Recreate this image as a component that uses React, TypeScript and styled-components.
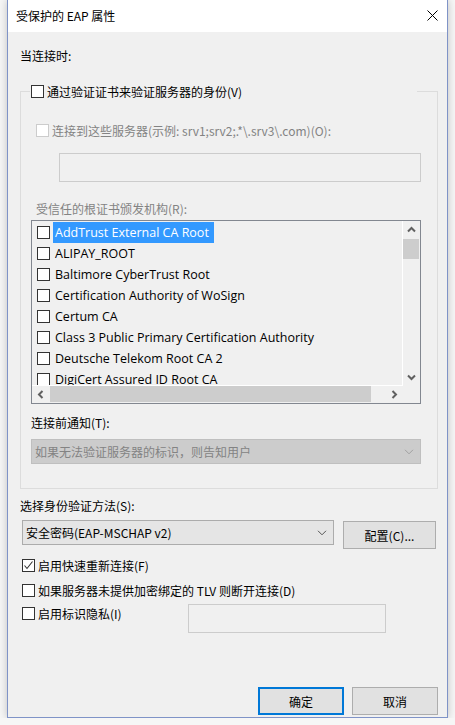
import { FC, ReactNode } from 'react'
import styled, { createGlobalStyle, css } from 'styled-components'

const GlobalStyle = createGlobalStyle`
  html, body {
    margin: 0;
    padding: 0;
    background: #f6f6f6;
  }
  body {
    font-family: "Noto Sans CJK SC", "Noto Sans", sans-serif;
    font-size: 12px;
    color: #000;
  }
`

const certificates = [
  'AddTrust External CA Root',
  'ALIPAY_ROOT',
  'Baltimore CyberTrust Root',
  'Certification Authority of WoSign',
  'Certum CA',
  'Class 3 Public Primary Certification Authority',
  'Deutsche Telekom Root CA 2',
  'DigiCert Assured ID Root CA',
]

type CheckBoxProps = {
  checked?: boolean
  disabled?: boolean
}

const CheckBox: FC<CheckBoxProps> = ({ checked, disabled }) => (
  <StyledBox $disabled={disabled}>
    {checked && (
      <svg width="11" height="11" viewBox="0 0 11 11">
        <polyline points="1.5,5.5 4,8.5 9.5,1.5" fill="none" stroke="#333" strokeWidth="1.1" />
      </svg>
    )}
  </StyledBox>
)

type CheckRowProps = CheckBoxProps & {
  children: ReactNode
}

const CheckRow: FC<CheckRowProps> = ({ checked, disabled, children }) => (
  <StyledCheckRow $disabled={disabled}>
    <CheckBox checked={checked} disabled={disabled} />
    <span>{children}</span>
  </StyledCheckRow>
)

const Chevron: FC<{ color: string }> = ({ color }) => (
  <svg width="10" height="6" viewBox="0 0 10 6">
    <polyline points="1,0.8 5,4.8 9,0.8" fill="none" stroke={color} strokeWidth="1" />
  </svg>
)

type ArrowProps = { dir: 'up' | 'down' | 'left' | 'right' }

const ScrollArrow: FC<ArrowProps> = ({ dir }) => {
  const rotate = { up: 0, right: 90, down: 180, left: 270 }[dir]
  return (
    <svg width="9" height="9" viewBox="0 0 9 9" style={{ transform: `rotate(${rotate}deg)` }}>
      <polyline points="1,6.5 4.5,3 8,6.5" fill="none" stroke="#606060" strokeWidth="2" />
    </svg>
  )
}

export default function App() {
  return (
    <>
      <GlobalStyle />
      <StyledWindow>
        <StyledTitleBar>
          <StyledTitle>受保护的 EAP 属性</StyledTitle>
          <svg width="11" height="11" viewBox="0 0 11 11">
            <path d="M0.5 0.5 L10.5 10.5 M10.5 0.5 L0.5 10.5" stroke="#000" strokeWidth="1" />
          </svg>
        </StyledTitleBar>

        <StyledContent>
          <StyledLabel $top={15}>当连接时:</StyledLabel>

          <StyledGroup>
            <StyledLegend>
              <CheckBox />
              <span>通过验证证书来验证服务器的身份(V)</span>
            </StyledLegend>

            <StyledGroupBody>
              <StyledIndent $top={22} $left={5}>
                <CheckRow disabled>连接到这些服务器(示例: srv1;srv2;.*\.srv3\.com)(O):</CheckRow>
              </StyledIndent>
              <StyledTextBox $top={14} $left={28} $width={362} />

              <StyledLabel $top={18} $left={5} $muted>
                受信任的根证书颁发机构(R):
              </StyledLabel>

              <StyledListBox>
                <StyledListView>
                  {certificates.map((name, i) => (
                    <StyledListItem key={name}>
                      <CheckBox />
                      <StyledItemText $selected={i === 0}>{name}</StyledItemText>
                    </StyledListItem>
                  ))}
                </StyledListView>
                <StyledVScroll>
                  <StyledArrowButton>
                    <ScrollArrow dir="up" />
                  </StyledArrowButton>
                  <StyledVTrack>
                    <StyledVThumb />
                  </StyledVTrack>
                  <StyledArrowButton>
                    <ScrollArrow dir="down" />
                  </StyledArrowButton>
                </StyledVScroll>
                <StyledHScroll>
                  <StyledArrowButton>
                    <ScrollArrow dir="left" />
                  </StyledArrowButton>
                  <StyledHTrack>
                    <StyledHThumb />
                  </StyledHTrack>
                  <StyledArrowButton>
                    <ScrollArrow dir="right" />
                  </StyledArrowButton>
                </StyledHScroll>
                <StyledCorner />
              </StyledListBox>

              <StyledLabel $top={10}>连接前通知(T):</StyledLabel>
              <StyledSelect $disabled $width={390}>
                <span>如果无法验证服务器的标识，则告知用户</span>
                <Chevron color="#a0a0a0" />
              </StyledSelect>
            </StyledGroupBody>
          </StyledGroup>

          <StyledLabel $top={8}>选择身份验证方法(S):</StyledLabel>
          <StyledMethodRow>
            <StyledSelect $width={312}>
              <span>安全密码(EAP-MSCHAP v2)</span>
              <Chevron color="#555" />
            </StyledSelect>
            <StyledButton $width={93} $offset={1}>
              配置(C)...
            </StyledButton>
          </StyledMethodRow>

          <StyledOptions>
            <CheckRow checked>启用快速重新连接(F)</CheckRow>
            <CheckRow>如果服务器未提供加密绑定的 TLV 则断开连接(D)</CheckRow>
            <StyledPrivacyRow>
              <StyledPrivacyLabel>
                <CheckRow>启用标识隐私(I)</CheckRow>
              </StyledPrivacyLabel>
              <StyledTextBox $width={198} />
            </StyledPrivacyRow>
          </StyledOptions>

          <StyledFooter>
            <StyledButton $width={86} $primary>
              确定
            </StyledButton>
            <StyledButton $width={86}>取消</StyledButton>
          </StyledFooter>
        </StyledContent>
      </StyledWindow>
    </>
  )
}

const StyledWindow = styled.div`
  margin-left: 7px;
  width: 441px;
  height: 718px;
  box-sizing: border-box;
  border: 1px solid #7f93c7;
  border-top: none;
  background: #f0f0f0;
  display: flex;
  flex-direction: column;
  box-shadow: 0 0 8px rgba(0, 0, 0, 0.22);
`

const StyledTitleBar = styled.div`
  height: 31px;
  flex: none;
  background: #fff;
  display: flex;
  align-items: center;
  justify-content: space-between;
  padding: 0 9px 1px 8px;
`

const StyledTitle = styled.span`
  line-height: 17px;
`

const StyledContent = styled.div`
  flex: 1;
  display: flex;
  flex-direction: column;
  padding: 0 10px 2px 12px;
`

const StyledLabel = styled.div<{ $top?: number; $left?: number; $muted?: boolean }>`
  line-height: 17px;
  margin-top: ${(p) => p.$top ?? 0}px;
  margin-left: ${(p) => p.$left ?? 0}px;
  color: ${(p) => (p.$muted ? '#838383' : '#000')};
`

const StyledBox = styled.span<{ $disabled?: boolean }>`
  width: 13px;
  height: 13px;
  box-sizing: border-box;
  flex: none;
  display: inline-flex;
  align-items: center;
  justify-content: center;
  border: 1px solid ${(p) => (p.$disabled ? '#cccccc' : '#333')};
  background: #fff;
`

const StyledCheckRow = styled.div<{ $disabled?: boolean }>`
  display: flex;
  align-items: center;
  gap: 3px;
  line-height: 17px;
  white-space: nowrap;
  color: ${(p) => (p.$disabled ? '#838383' : '#000')};
`

const StyledGroup = styled.fieldset`
  margin: 19px -1px 0 0;
  padding: 0;
  min-inline-size: 0;
  border: 1px solid #dcdcdc;
`

const StyledLegend = styled.legend`
  margin-left: 9px;
  padding: 0 0 0 1px;
  width: 386px;
  height: 17px;
  display: flex;
  align-items: center;
  gap: 3px;
  line-height: 17px;
`

const StyledGroupBody = styled.div`
  display: flex;
  flex-direction: column;
  padding: 0 15px 24px 10px;
`

const StyledIndent = styled.div<{ $top: number; $left: number }>`
  margin-top: ${(p) => p.$top}px;
  margin-left: ${(p) => p.$left}px;
`

const StyledTextBox = styled.div<{ $top?: number; $left?: number; $width: number }>`
  margin-top: ${(p) => p.$top ?? 0}px;
  margin-left: ${(p) => p.$left ?? 0}px;
  width: ${(p) => p.$width}px;
  height: 29px;
  box-sizing: border-box;
  border: 1px solid #cccccc;
  background: #f0f0f0;
  flex: none;
`

const StyledListBox = styled.div`
  margin-top: 3px;
  width: 390px;
  height: 184px;
  box-sizing: border-box;
  border: 1px solid #828790;
  display: grid;
  grid-template-columns: 1fr 17px;
  grid-template-rows: 1fr 17px;
  overflow: hidden;
`

const StyledListView = styled.div`
  overflow: hidden;
  padding-top: 1px;
  border-right: 1px solid #fff;
  border-bottom: 1px solid #fff;
`

const StyledListItem = styled.div`
  height: 21px;
  display: flex;
  align-items: center;
  padding-left: 5px;
  gap: 3px;
  white-space: nowrap;
`

const StyledItemText = styled.span<{ $selected?: boolean }>`
  font-family: "Open Sans", "Noto Sans CJK SC", sans-serif;
  font-size: 12.5px;
  line-height: 21px;
  padding: 0 5px 0 2px;
  ${(p) =>
    p.$selected &&
    css`
      background: #3399ff;
      color: #fff;
    `}
`

const StyledArrowButton = styled.div`
  width: 17px;
  height: 17px;
  flex: none;
  display: flex;
  align-items: center;
  justify-content: center;
`

const StyledVScroll = styled.div`
  display: flex;
  flex-direction: column;
`

const StyledVTrack = styled.div`
  flex: 1;
  padding: 1px 1px 0 0;
`

const StyledVThumb = styled.div`
  height: 20px;
  background: #cdcdcd;
`

const StyledHScroll = styled.div`
  display: flex;
`

const StyledHTrack = styled.div`
  flex: 1;
  padding: 0 15px 1px 1px;
`

const StyledHThumb = styled.div`
  height: 100%;
  background: #cdcdcd;
`

const StyledCorner = styled.div`
  background: #f0f0f0;
`

const StyledSelect = styled.div<{ $disabled?: boolean; $width: number }>`
  width: ${(p) => p.$width}px;
  height: 25px;
  box-sizing: border-box;
  flex: none;
  display: flex;
  align-items: center;
  justify-content: space-between;
  padding: 0 6px 0 3px;
  line-height: 17px;
  ${(p) =>
    p.$disabled
      ? css`
          margin-top: 8px;
          background: #cccccc;
          border: 1px solid #bfbfbf;
          color: #838383;
        `
      : css`
          background: #e5e5e5;
          border: 1px solid #acacac;
        `}
`

const StyledMethodRow = styled.div`
  margin-top: 6px;
  margin-left: 2px;
  display: flex;
  align-items: flex-start;
  gap: 9px;
`

const StyledButton = styled.div<{ $width: number; $primary?: boolean; $offset?: number }>`
  width: ${(p) => p.$width}px;
  height: 28px;
  box-sizing: border-box;
  margin-top: ${(p) => p.$offset ?? 0}px;
  display: flex;
  align-items: center;
  justify-content: center;
  line-height: 17px;
  background: #e1e1e1;
  border: ${(p) => (p.$primary ? '2px solid #0078d7' : '1px solid #adadad')};
`

const StyledOptions = styled.div`
  margin-top: 8px;
  margin-left: 2px;
  display: flex;
  flex-direction: column;
  gap: 8px;
`

const StyledPrivacyRow = styled.div`
  display: flex;
  align-items: flex-start;
  margin-top: -3px;
`

const StyledPrivacyLabel = styled.div`
  width: 166px;
  padding-top: 1px;
`

const StyledFooter = styled.div`
  margin-top: auto;
  margin-right: -1px;
  display: flex;
  justify-content: flex-end;
  gap: 8px;
`
